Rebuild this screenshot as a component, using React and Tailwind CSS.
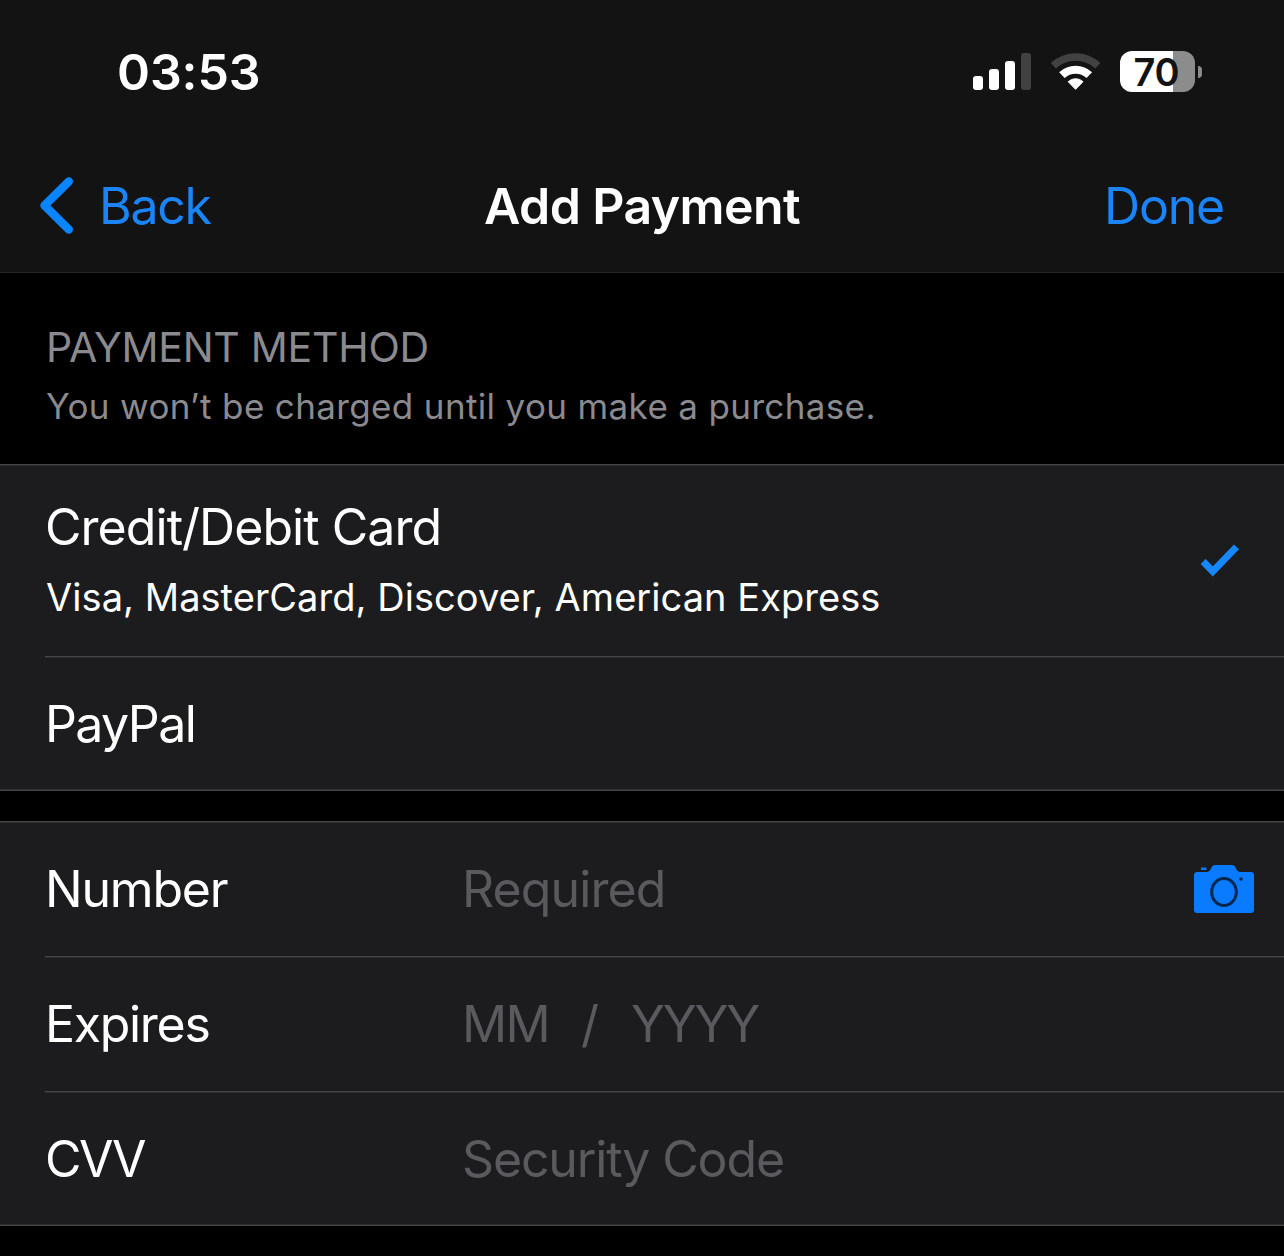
function SignalIcon() {
  return (
    <svg className="h-[38px] w-[58px]" viewBox="0 0 58 38" fill="#fff">
      <rect x="0" y="23" width="10" height="14" rx="3" />
      <rect x="16" y="16" width="10" height="21" rx="3" />
      <rect x="32" y="8" width="10" height="29" rx="3" />
      <rect x="48" y="0" width="10" height="37" rx="3" fill="#414141" />
    </svg>
  );
}

function WifiIcon() {
  return (
    <svg className="ml-5 h-[38px] w-[50px]" viewBox="0 0 50 38" fill="none">
      <path d="M2.300 12.800A32.700 32.700 0 0 1 46.900 12.800" stroke="#414141" strokeWidth="7.600" />
      <path d="M10.900 22.100A20 20 0 0 1 38.300 22.100" stroke="#fff" strokeWidth="8" />
      <path
        d="M24.600 36.300L17.200 28.700A10.600 10.600 0 0 1 32 28.700Z"
        fill="#fff"
        stroke="#fff"
        strokeWidth="1"
        strokeLinejoin="round"
      />
    </svg>
  );
}

function Battery({ level }) {
  return (
    <div className="mb-px ml-[19px] flex items-center">
      <div
        className="flex h-[41px] w-[75px] items-center justify-center rounded-[12px] pt-px pr-0.5 text-[38px] leading-[40px] font-semibold tracking-[-0.2px] text-[#131313]"
        style={{ background: `linear-gradient(to right, #fff ${level + 0.7}%, #8c8c8c ${level + 0.7}%)` }}
      >
        {level}
      </div>
      <div className="ml-[3px] h-3 w-1 rounded-r-full bg-[#8c8c8c]" />
    </div>
  );
}

function StatusBar() {
  return (
    <div className="flex h-36 items-center justify-between pr-[82px] pl-[117px]">
      <span className="text-[50px] leading-none font-semibold tracking-[-0.1px]">03:53</span>
      <div className="flex items-center">
        <SignalIcon />
        <WifiIcon />
        <Battery level={70} />
      </div>
    </div>
  );
}

function NavBar() {
  return (
    <nav className="flex h-[124px] items-center px-9 text-[50px] leading-none">
      <button className="flex flex-1 items-center text-left text-[#1a84f8]">
        <svg className="h-[60px] w-10" viewBox="0 0 40 60" fill="none">
          <path
            d="M32.800 5.500L8.500 29.500L32.800 53.500"
            stroke="#0a84ff"
            strokeWidth="8.400"
            strokeLinecap="round"
            strokeLinejoin="round"
          />
        </svg>
        <span className="ml-[23px] tracking-[-1.3px]">Back</span>
      </button>
      <h1 className="font-semibold tracking-[-0.6px] whitespace-nowrap">Add Payment</h1>
      <button className="flex-1 text-right tracking-[-1.2px] text-[#1a84f8]">
        <span className="mr-6">Done</span>
      </button>
    </nav>
  );
}

function CheckIcon() {
  return (
    <svg className="h-9 w-10" viewBox="0 0 40 36" fill="none">
      <path d="M3.200 18.500L12.800 28.500L36.500 3.800" stroke="#1687fc" strokeWidth="7" />
    </svg>
  );
}

function CameraIcon() {
  return (
    <svg className="h-[48px] w-[60px]" viewBox="0 0 60 48" fill="#0a7aff">
      <path d="M3 7H12C15 7 16 5.500 17 3.500C18 1 19 0 22 0H37.500C40 0 41 1 42 3.500C43 5.500 44 7 47 7H57Q60 7 60 10V45Q60 48 57 48H3Q0 48 0 45V10Q0 7 3 7Z" />
      <rect x="7" y="2.500" width="5.500" height="2.500" />
      <ellipse cx="30" cy="27" rx="12.300" ry="13.500" stroke="#05264f" strokeWidth="3" />
      <circle cx="47" cy="14" r="1.700" fill="#05264f" />
    </svg>
  );
}

function Hairline() {
  return <div className="h-0.5 border-t border-[#464648] bg-[#2d2d2f]" />;
}

function Separator() {
  return (
    <div className="pl-[45px]">
      <Hairline />
    </div>
  );
}

function Group({ children }) {
  return (
    <section className="bg-[#1c1c1e]">
      <Hairline />
      {children}
      <div className="h-0.5 border-b border-[#464648] bg-[#2d2d2f]" />
    </section>
  );
}

function FieldRow({ label, height = "h-[133px] pb-0.5", tracking, children }) {
  return (
    <div className={`flex items-center pr-[30px] pl-[45px] text-[50px] leading-none ${height}`}>
      <span className={`w-[417px] ${tracking}`}>{label}</span>
      {children}
    </div>
  );
}

export default function App() {
  return (
    <div className="h-[1256px] w-[1284px] overflow-hidden bg-black font-['Inter',sans-serif] text-white">
      <header className="h-[273px] border-b border-[#272727] bg-[#131313]">
        <StatusBar />
        <NavBar />
      </header>

      <div className="flex h-[191px] flex-col pt-[50px] pl-[46px] text-[#8a8a8f]">
        <h2 className="text-[41px] leading-[48px] tracking-[-0.25px]">PAYMENT METHOD</h2>
        <p className="mt-[13px] text-[35px] leading-[44px] tracking-[0.36px]">
          You won’t be charged until you make a purchase.
        </p>
      </div>

      <Group>
        <div className="flex h-[190px] items-center justify-between pr-[44px] pl-[46px]">
          <div className="pb-[5px]">
            <p className="-ml-px text-[50px] leading-[60px] tracking-[-0.95px]">Credit/Debit Card</p>
            <p className="mt-4 text-[38px] leading-[48px] tracking-[0.05px]">
              Visa, MasterCard, Discover, American Express
            </p>
          </div>
          <CheckIcon />
        </div>
        <Separator />
        <div className="flex h-[131px] items-center pl-[45px] text-[50px] leading-none tracking-[-1.6px]">
          PayPal
        </div>
      </Group>

      <div className="h-[30px]" />

      <Group>
        <FieldRow label="Number" tracking="tracking-[-1.2px]">
          <span className="flex-1 tracking-[-0.9px] text-[#5a5a5e]">Required</span>
          <CameraIcon />
        </FieldRow>
        <Separator />
        <FieldRow label="Expires" tracking="tracking-[-1.3px]">
          <div className="flex text-[#5a5a5e]">
            <span className="w-[119px] tracking-[-1.6px]">MM</span>
            <span className="w-[50px]">/</span>
            <span className="tracking-[-2.2px]">YYYY</span>
          </div>
        </FieldRow>
        <Separator />
        <FieldRow label="CVV" height="h-[131px]" tracking="tracking-[-2.4px]">
          <span className="tracking-[-1.15px] text-[#5a5a5e]">Security Code</span>
        </FieldRow>
      </Group>
    </div>
  );
}
